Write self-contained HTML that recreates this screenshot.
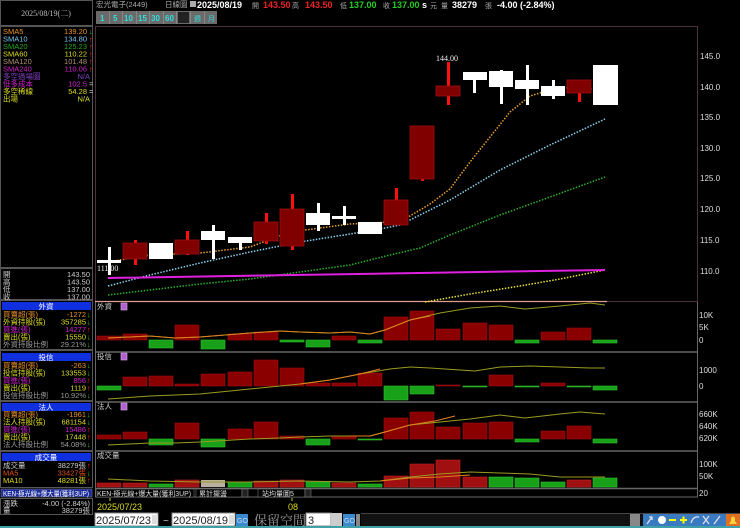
<!DOCTYPE html>
<html><head><meta charset="utf-8"><style>
html,body{margin:0;padding:0;background:#000;width:740px;height:528px;overflow:hidden}
svg{display:block}
text{font-family:"Liberation Sans","Noto Sans CJK TC",sans-serif}
.s{font-family:"Liberation Serif","Noto Serif CJK SC",serif}
</style></head><body>
<svg width="740" height="528" viewBox="0 0 740 528" xmlns="http://www.w3.org/2000/svg">
<rect width="740" height="528" fill="#000"/>
<g fill="none" stroke="#555" stroke-width="1">
<rect x="0.5" y="0.5" width="92" height="25"/>
<rect x="0.5" y="26.5" width="92" height="241"/>
<rect x="0.5" y="268.5" width="92" height="31"/>
<rect x="0.5" y="300.5" width="92" height="49"/>
<rect x="0.5" y="350.5" width="92" height="50"/>
<rect x="0.5" y="401.5" width="92" height="49"/>
<rect x="0.5" y="451.5" width="92" height="36"/>
<rect x="0.5" y="498.5" width="92" height="16"/>
</g>
<text x="46" y="16" font-size="8" fill="#bbb" text-anchor="middle" class="s">2025/08/19(二)</text>
<g font-size="7.5" class="s">
<text x="3" y="34" fill="#e8902a">SMA5</text><text x="87" y="34" fill="#e8902a" text-anchor="end">139.20</text><text x="89" y="34" fill="#2c2">↓</text>
<text x="3" y="41.5" fill="#7cc8f0">SMA10</text><text x="87" y="41.5" fill="#7cc8f0" text-anchor="end">134.80</text><text x="89" y="41.5" fill="#f22">↑</text>
<text x="3" y="49" fill="#2a2">SMA20</text><text x="87" y="49" fill="#2a2" text-anchor="end">125.23</text><text x="89" y="49" fill="#f22">↑</text>
<text x="3" y="56.5" fill="#dd2">SMA60</text><text x="87" y="56.5" fill="#dd2" text-anchor="end">110.22</text><text x="89" y="56.5" fill="#f22">↑</text>
<text x="3" y="64" fill="#b09070">SMA120</text><text x="87" y="64" fill="#b09070" text-anchor="end">101.48</text><text x="89" y="64" fill="#f22">↑</text>
<text x="3" y="71.5" fill="#d020d0">SMA240</text><text x="87" y="71.5" fill="#d020d0" text-anchor="end">110.06</text><text x="89" y="71.5" fill="#f22">↑</text>
<text x="3" y="79" fill="#8040c0">多空過場圖</text><text x="90" y="79" fill="#8040c0" text-anchor="end">N/A</text>
<text x="3" y="86.5" fill="#d020d0">低多成本</text><text x="87" y="86.5" fill="#d020d0" text-anchor="end">102.5</text><text x="89" y="86.5" fill="#ccc">=</text>
<text x="3" y="94" fill="#dd2">多空稀線</text><text x="87" y="94" fill="#dd2" text-anchor="end">54.28</text><text x="89" y="94" fill="#ccc">=</text>
<text x="3" y="101.5" fill="#dd2">出場</text><text x="90" y="101.5" fill="#dd2" text-anchor="end">N/A</text>
</g>
<g font-size="7.5" fill="#ccc" class="s">
<text x="3" y="277">開</text><text x="90" y="277" text-anchor="end">143.50</text>
<text x="3" y="284.5">高</text><text x="90" y="284.5" text-anchor="end">143.50</text>
<text x="3" y="292">低</text><text x="90" y="292" text-anchor="end">137.00</text>
<text x="3" y="299.5">收</text><text x="90" y="299.5" text-anchor="end">137.00</text>
</g>
<g class="s" font-size="7.5">
<rect x="2" y="302" width="89" height="8" fill="#1030e0"/><text x="46" y="309" fill="#fff" text-anchor="middle">外資</text>
<text x="3" y="317" fill="#e8902a">買賣超(張)</text><text x="86" y="317" fill="#e8902a" text-anchor="end">-1272</text><text x="87" y="317" fill="#2c2">↓</text>
<text x="3" y="324.5" fill="#dd2">外資持股(張)</text><text x="86" y="324.5" fill="#dd2" text-anchor="end">357285</text><text x="87" y="324.5" fill="#2c2">↓</text>
<text x="3" y="332" fill="#d020d0">買進(張)</text><text x="86" y="332" fill="#d020d0" text-anchor="end">14277</text><text x="87" y="332" fill="#f22">↑</text>
<text x="3" y="339.5" fill="#dd2">賣出(張)</text><text x="86" y="339.5" fill="#dd2" text-anchor="end">15550</text><text x="87" y="339.5" fill="#2c2">↓</text>
<text x="3" y="347" fill="#999">外資持股比例</text><text x="86" y="347" fill="#999" text-anchor="end">29.21%</text><text x="87" y="347" fill="#2c2">↓</text>
<rect x="2" y="353" width="89" height="8" fill="#1030e0"/><text x="46" y="360" fill="#fff" text-anchor="middle">投信</text>
<text x="3" y="368" fill="#e8902a">買賣超(張)</text><text x="86" y="368" fill="#e8902a" text-anchor="end">-263</text><text x="87" y="368" fill="#2c2">↓</text>
<text x="3" y="375.5" fill="#dd2">投信持股(張)</text><text x="86" y="375.5" fill="#dd2" text-anchor="end">133553</text><text x="87" y="375.5" fill="#2c2">↓</text>
<text x="3" y="383" fill="#d020d0">買進(張)</text><text x="86" y="383" fill="#d020d0" text-anchor="end">856</text><text x="87" y="383" fill="#f22">↑</text>
<text x="3" y="390.5" fill="#dd2">賣出(張)</text><text x="86" y="390.5" fill="#dd2" text-anchor="end">1119</text><text x="87" y="390.5" fill="#f22">↑</text>
<text x="3" y="398" fill="#999">投信持股比例</text><text x="86" y="398" fill="#999" text-anchor="end">10.92%</text><text x="87" y="398" fill="#2c2">↓</text>
<rect x="2" y="403" width="89" height="8" fill="#1030e0"/><text x="46" y="410" fill="#fff" text-anchor="middle">法人</text>
<text x="3" y="417" fill="#e8902a">買賣超(張)</text><text x="86" y="417" fill="#e8902a" text-anchor="end">-1961</text><text x="87" y="417" fill="#2c2">↓</text>
<text x="3" y="424.5" fill="#dd2">法人持股(張)</text><text x="86" y="424.5" fill="#dd2" text-anchor="end">681154</text><text x="87" y="424.5" fill="#2c2">↓</text>
<text x="3" y="432" fill="#d020d0">買進(張)</text><text x="86" y="432" fill="#d020d0" text-anchor="end">15486</text><text x="87" y="432" fill="#f22">↑</text>
<text x="3" y="439.5" fill="#dd2">賣出(張)</text><text x="86" y="439.5" fill="#dd2" text-anchor="end">17448</text><text x="87" y="439.5" fill="#f22">↑</text>
<text x="3" y="447" fill="#999">法人持股比例</text><text x="86" y="447" fill="#999" text-anchor="end">54.08%</text><text x="87" y="447" fill="#2c2">↓</text>
<rect x="2" y="453" width="89" height="8" fill="#1030e0"/><text x="46" y="460" fill="#fff" text-anchor="middle">成交量</text>
<text x="3" y="468" fill="#ccc">成交量</text><text x="86" y="468" fill="#ccc" text-anchor="end">38279張</text><text x="87" y="468" fill="#f22">↑</text>
<text x="3" y="475.5" fill="#e05020">MA5</text><text x="86" y="475.5" fill="#e05020" text-anchor="end">33427張</text><text x="87" y="475.5" fill="#2c2">↓</text>
<text x="3" y="483" fill="#dd2">MA10</text><text x="86" y="483" fill="#dd2" text-anchor="end">48281張</text><text x="87" y="483" fill="#f22">↑</text>
<rect x="1" y="489" width="91" height="8" fill="#1a2a9a" stroke="#888" stroke-width="0.5"/><text x="3" y="496" fill="#fff" font-size="7" textLength="86" lengthAdjust="spacingAndGlyphs">KEN-極光線+爆大量(獲利3UP)</text>
<text x="3" y="506" fill="#ccc">漲跌</text><text x="90" y="506" fill="#ccc" text-anchor="end">-4.00 (-2.84%)</text>
<text x="3" y="513" fill="#ccc">量</text><text x="90" y="513" fill="#ccc" text-anchor="end">38279張</text>
</g>
<g font-size="7.5" class="s" fill="#aaa">
<text x="96" y="7">宏光電子(2449)</text><text x="165" y="7">日線圖</text>
</g>
<rect x="190" y="1" width="6" height="6" fill="#aaa"/>
<g font-size="9" font-weight="bold">
<text x="197" y="8" fill="#fff">2025/08/19</text>
<text x="252" y="8" fill="#aaa" font-weight="normal" font-size="7">開</text><text x="263" y="8" fill="#e22">143.50</text>
<text x="292" y="8" fill="#aaa" font-weight="normal" font-size="7">高</text><text x="305" y="8" fill="#e22">143.50</text>
<text x="340" y="8" fill="#aaa" font-weight="normal" font-size="7">低</text><text x="349" y="8" fill="#2c2">137.00</text>
<text x="383" y="8" fill="#aaa" font-weight="normal" font-size="7">收</text><text x="392" y="8" fill="#2c2">137.00</text>
<text x="422" y="8" fill="#fff">s</text><text x="430" y="8" fill="#aaa" font-weight="normal" font-size="7">元</text>
<text x="441" y="8" fill="#aaa" font-weight="normal" font-size="7">量</text><text x="452" y="8" fill="#fff">38279</text><text x="485" y="8" fill="#aaa" font-weight="normal" font-size="7">張</text>
<text x="497" y="8" fill="#fff">-4.00 (-2.84%)</text>
</g>
<g font-size="8" font-weight="bold" fill="#3dd">
<rect x="96" y="11" width="121" height="13" fill="#6a6a6a"/>
<g stroke="#999" stroke-width="0.6"><line x1="109.5" y1="11" x2="109.5" y2="24"/><line x1="122.5" y1="11" x2="122.5" y2="24"/><line x1="136.5" y1="11" x2="136.5" y2="24"/><line x1="149.5" y1="11" x2="149.5" y2="24"/><line x1="163.5" y1="11" x2="163.5" y2="24"/><line x1="176.5" y1="11" x2="176.5" y2="24"/><line x1="190.5" y1="11" x2="190.5" y2="24"/><line x1="204.5" y1="11" x2="204.5" y2="24"/></g>
<rect x="178" y="12" width="11" height="11" fill="#222"/>
<text x="100" y="21">1</text><text x="113" y="21">5</text><text x="124" y="21">10</text><text x="138" y="21">15</text><text x="151" y="21">30</text><text x="165" y="21">60</text>
<text x="194" y="21" font-size="7" font-weight="normal">週</text><text x="208" y="21" font-size="7" font-weight="normal">月</text>
</g>
<rect x="95.5" y="26.5" width="602" height="275" fill="none" stroke="#503038"/>
<line x1="95" y1="301.5" x2="607" y2="301.5" stroke="#e0a090" stroke-width="1.2"/>
<g font-size="8" fill="#ddd">
<text x="700" y="59">145.0</text><text x="700" y="90">140.0</text><text x="700" y="120">135.0</text><text x="700" y="151">130.0</text><text x="700" y="181">125.0</text><text x="700" y="212">120.0</text><text x="700" y="243">115.0</text><text x="700" y="274">110.0</text>
</g>
<g fill="none" stroke-width="1.5" stroke-dasharray="1.5 1.5">
<polyline stroke="#2bb02b" points="108,295 150,290 200,284 250,279 300,272 350,265 390,255 420,248 450,235 500,215 550,197 605,177"/>
<polyline stroke="#8ad0f0" points="108,286 150,275 200,263 250,252 300,242 350,234 380,229 400,225 420,215 450,200 500,170 550,145 605,119"/>
<polyline stroke="#e8a030" points="108,262 150,255 200,253 250,247 290,232 350,224 390,222 410,216 430,204 450,189 470,162 490,137 510,112 530,96 550,90 575,87 605,91"/>
<polyline stroke="#e8e030" points="425,302 470,294 520,286 560,279 605,270"/>
</g>
<line x1="108" y1="278" x2="605" y2="270" stroke="#e020e0" stroke-width="2"/>
<g fill="#ff1010">
<rect x="108" y="247" width="3" height="28" fill="#fff"/>
<rect x="134" y="240" width="3" height="25"/><rect x="186" y="231" width="3" height="24"/>
<rect x="212" y="225" width="3" height="34" fill="#fff"/><rect x="239" y="237" width="3" height="13" fill="#fff"/>
<rect x="265" y="213" width="3" height="31"/><rect x="291" y="194" width="3" height="56"/>
<rect x="317" y="203" width="3" height="28" fill="#fff"/><rect x="343" y="206" width="3" height="19" fill="#fff"/>
<rect x="395" y="188" width="3" height="37"/><rect x="421" y="126" width="3" height="55"/>
<rect x="447" y="62" width="3" height="43"/><rect x="473" y="72" width="3" height="21" fill="#fff"/>
<rect x="500" y="70" width="3" height="34" fill="#fff"/><rect x="526" y="65" width="3" height="40" fill="#fff"/>
<rect x="552" y="80" width="3" height="19" fill="#fff"/><rect x="578" y="80" width="3" height="22"/>
</g>
<g fill="#fff">
<rect x="97" y="260" width="24" height="3"/><rect x="149" y="243" width="24" height="16"/>
<rect x="201" y="231" width="24" height="9"/><rect x="228" y="237" width="24" height="6"/>
<rect x="306" y="213" width="24" height="12"/><rect x="332" y="216" width="24" height="3"/>
<rect x="358" y="222" width="24" height="12"/><rect x="463" y="72" width="24" height="8"/>
<rect x="489" y="71" width="24" height="16"/><rect x="515" y="80" width="24" height="9"/>
<rect x="541" y="86" width="24" height="10"/><rect x="593" y="65" width="25" height="40"/>
</g>
<g fill="#800000" stroke="#a01010" stroke-width="0.8">
<rect x="123" y="243" width="24" height="16"/><rect x="175" y="240" width="24" height="14"/>
<rect x="254" y="222" width="24" height="19"/><rect x="280" y="209" width="24" height="37"/>
<rect x="384" y="200" width="24" height="25"/><rect x="410" y="126" width="24" height="53"/>
<rect x="436" y="86" width="24" height="10"/><rect x="567" y="80" width="24" height="13"/>
</g>
<text x="436" y="61" font-size="8" fill="#eee" class="s">144.00</text>
<text x="97" y="271" font-size="8" fill="#eee" class="s">111.00</text>
<g fill="none" stroke="#666" stroke-width="1.5">
<line x1="95" y1="352" x2="698" y2="352"/><line x1="95" y1="402" x2="698" y2="402"/><line x1="95" y1="451" x2="698" y2="451"/><line x1="95" y1="488.5" x2="698" y2="488.5"/>
</g>
<line x1="697.5" y1="302" x2="697.5" y2="497" stroke="#666"/>
<line x1="95.5" y1="302" x2="95.5" y2="497" stroke="#666"/>
<line x1="95" y1="497" x2="698" y2="497" stroke="#666"/>
<g font-size="7.5" fill="#ccc" class="s"><text x="97" y="309">外資</text><text x="97" y="359">投信</text><text x="97" y="409">法人</text><text x="97" y="458">成交量</text></g>
<g fill="#b060d0" stroke="#e0b0f0" stroke-width="0.6"><rect x="121" y="303" width="6" height="7"/><rect x="121" y="353" width="6" height="7"/><rect x="121" y="403" width="6" height="7"/></g>
<g font-size="8" fill="#ddd">
<text x="699" y="318">10K</text><text x="699" y="330">5K</text><text x="699" y="343">0</text>
<text x="699" y="373">1000</text><text x="699" y="389">0</text>
<text x="699" y="417">660K</text><text x="699" y="429">640K</text><text x="699" y="441">620K</text>
<text x="699" y="467">100K</text><text x="699" y="479">50K</text><text x="699" y="496">20</text>
</g>
<g fill="#8a0000" stroke="#a01010" stroke-width="0.6">
<rect x="97" y="336" width="24" height="4"/><rect x="123" y="334" width="24" height="6"/><rect x="175" y="325" width="24" height="15"/>
<rect x="228" y="334" width="24" height="6"/><rect x="254" y="332" width="24" height="8"/><rect x="332" y="336" width="24" height="4"/>
<rect x="384" y="317" width="24" height="23"/><rect x="410" y="311" width="24" height="29"/><rect x="436" y="329" width="24" height="11"/>
<rect x="463" y="323" width="24" height="17"/><rect x="489" y="325" width="24" height="15"/><rect x="541" y="332" width="24" height="8"/><rect x="567" y="328" width="24" height="12"/>
</g>
<g fill="#18a018" stroke="#30c030" stroke-width="0.6">
<rect x="149" y="340" width="24" height="8"/><rect x="201" y="340" width="24" height="9"/><rect x="280" y="340" width="24" height="2"/>
<rect x="306" y="340" width="24" height="7"/><rect x="358" y="340" width="24" height="3"/><rect x="515" y="340" width="24" height="3"/><rect x="593" y="340" width="24" height="3"/>
</g>
<polyline fill="none" stroke="#9a9a20" points="108,338 150,336 175,338 200,337 250,333 280,331 300,332 330,333 350,332 370,334 385,330 410,320 440,313 470,308 500,306 525,309 560,306 590,303 605,305"/>
<polyline fill="none" stroke="#e08020" points="108,338 150,336 175,338 200,337 250,333 280,331 300,332 330,333 350,332 370,334 385,330 410,320 430,316"/>
<g fill="#8a0000" stroke="#a01010" stroke-width="0.6">
<rect x="123" y="377" width="24" height="9"/><rect x="149" y="376" width="24" height="10"/><rect x="175" y="384" width="24" height="2"/>
<rect x="201" y="374" width="24" height="12"/><rect x="228" y="372" width="24" height="14"/><rect x="254" y="360" width="24" height="26"/>
<rect x="280" y="368" width="24" height="18"/><rect x="306" y="383" width="24" height="3"/><rect x="332" y="383" width="24" height="3"/>
<rect x="358" y="373" width="24" height="13"/><rect x="436" y="385" width="24" height="1"/><rect x="489" y="375" width="24" height="11"/><rect x="541" y="383" width="24" height="3"/>
</g>
<g fill="#18a018" stroke="#30c030" stroke-width="0.6">
<rect x="97" y="386" width="24" height="4"/><rect x="384" y="386" width="24" height="14"/><rect x="410" y="386" width="24" height="8"/>
<rect x="463" y="386" width="24" height="1"/><rect x="515" y="386" width="24" height="1"/><rect x="567" y="386" width="24" height="1"/><rect x="593" y="386" width="24" height="4"/>
</g>
<polyline fill="none" stroke="#9a9a20" points="108,399 150,396 200,394 250,389 300,384 330,380 360,374 390,369 410,367 430,368 460,370 475,371 500,367 530,366 560,367 590,368 605,368"/>
<polyline fill="none" stroke="#e08020" points="300,384 330,380 360,374 380,369"/>
<g fill="#8a0000" stroke="#a01010" stroke-width="0.6">
<rect x="97" y="435" width="24" height="4"/><rect x="123" y="432" width="24" height="7"/><rect x="175" y="423" width="24" height="16"/>
<rect x="228" y="429" width="24" height="10"/><rect x="254" y="422" width="24" height="17"/><rect x="280" y="436" width="24" height="3"/>
<rect x="332" y="436" width="24" height="3"/><rect x="384" y="418" width="24" height="21"/><rect x="410" y="412" width="24" height="27"/>
<rect x="436" y="427" width="24" height="12"/><rect x="463" y="423" width="24" height="16"/><rect x="489" y="422" width="24" height="17"/>
<rect x="541" y="431" width="24" height="8"/><rect x="567" y="426" width="24" height="13"/>
</g>
<g fill="#18a018" stroke="#30c030" stroke-width="0.6">
<rect x="149" y="439" width="24" height="6"/><rect x="201" y="439" width="24" height="8"/><rect x="306" y="439" width="24" height="6"/>
<rect x="358" y="439" width="24" height="1"/><rect x="515" y="439" width="24" height="3"/><rect x="593" y="439" width="24" height="4"/>
</g>
<polyline fill="none" stroke="#9a9a20" points="108,445 150,443 175,443 200,442 250,439 280,438 300,437 330,436 350,436 370,436 385,432 410,425 440,422 470,419 500,415 525,418 560,414 580,412 605,414"/>
<polyline fill="none" stroke="#e08020" points="350,436 370,436 385,432 410,425 435,421 455,416"/>
<g fill="#a01010" stroke="#c02020" stroke-width="0.6">
<rect x="97" y="483" width="24" height="4"/><rect x="123" y="483" width="24" height="4"/><rect x="175" y="480" width="24" height="7"/>
<rect x="254" y="481" width="24" height="6"/><rect x="280" y="480" width="24" height="7"/><rect x="332" y="483" width="24" height="4"/>
<rect x="384" y="476" width="24" height="11"/><rect x="410" y="464" width="24" height="23"/><rect x="436" y="460" width="24" height="27"/>
<rect x="463" y="477" width="24" height="10"/><rect x="567" y="480" width="24" height="7"/>
</g>
<g fill="#18a018" stroke="#30c030" stroke-width="0.6">
<rect x="149" y="484" width="24" height="3"/><rect x="228" y="482" width="24" height="5"/><rect x="306" y="482" width="24" height="5"/>
<rect x="358" y="484" width="24" height="3"/><rect x="489" y="477" width="24" height="10"/><rect x="515" y="478" width="24" height="9"/>
<rect x="541" y="482" width="24" height="5"/><rect x="593" y="478" width="24" height="9"/>
</g>
<rect x="201" y="480" width="24" height="7" fill="#bbb0a0"/>
<polyline fill="none" stroke="#9a9a20" points="108,479 150,481 200,482 250,482 300,481 350,482 380,481 410,477 440,474 470,472 500,473 530,474 560,477 590,477 605,477"/>
<polyline fill="none" stroke="#e08020" points="380,481 410,478 440,477 470,475"/>
<g font-size="7" class="s" fill="#ddd">
<rect x="96" y="489" width="98" height="8" fill="#000" stroke="#888" stroke-width="0.5"/><text x="97" y="496" textLength="94" lengthAdjust="spacingAndGlyphs">KEN-極光線+爆大量(獲利3UP)</text>
<rect x="196" y="489" width="46" height="8" fill="#000" stroke="#888" stroke-width="0.5"/><text x="199" y="496">累計擺盪</text>
<rect x="242" y="489" width="6" height="8" fill="#222" stroke="#888" stroke-width="0.5"/>
<rect x="258" y="489" width="47" height="8" fill="#000" stroke="#888" stroke-width="0.5"/><text x="262" y="496">站均量圖5</text>
<rect x="305" y="489" width="6" height="8" fill="#222" stroke="#888" stroke-width="0.5"/>
</g>
<line x1="110" y1="498" x2="110" y2="501" stroke="#cc3"/><line x1="292" y1="498" x2="292" y2="501" stroke="#cc3"/>
<text x="97" y="510" font-size="9" fill="#dd2">2025/07/23</text>
<text x="288" y="510" font-size="9" fill="#dd2">08</text>
<rect x="95" y="513" width="63" height="13" fill="#fff" stroke="#888"/>
<text x="96" y="524" font-size="11" fill="#222">2025/07/23</text>
<rect x="152" y="515" width="6" height="9" fill="#ddd"/>
<text x="163" y="524" font-size="10" fill="#ccc">~</text>
<rect x="172" y="513" width="63" height="13" fill="#fff" stroke="#888"/>
<text x="173" y="524" font-size="11" fill="#222">2025/08/19</text>
<rect x="229" y="515" width="6" height="9" fill="#ddd"/>
<rect x="236" y="514" width="12" height="12" fill="#3a8ad0"/><text x="237" y="523" font-size="7" fill="#cde">GO</text>
<text x="254" y="525" font-size="13" fill="#999" class="s">保留空間</text>
<rect x="306" y="513" width="25" height="13" fill="#fff" stroke="#888"/><text x="308" y="524" font-size="11" fill="#222">3</text>
<rect x="331" y="513" width="11" height="13" fill="#ccc"/>
<rect x="343" y="514" width="12" height="12" fill="#3a8ad0"/><text x="344" y="523" font-size="7" fill="#cde">GO</text>
<rect x="356" y="514" width="4" height="12" fill="#888"/>
<rect x="361" y="513" width="380" height="13" fill="#111"/>
<line x1="361" y1="513.5" x2="740" y2="513.5" stroke="#444"/>
<rect x="630" y="514" width="10" height="12" fill="#888"/>
<rect x="643" y="514" width="97" height="12" fill="#3a7ac0"/>
<g stroke="#dde" stroke-width="1.3" fill="none">
<path d="M647,524 L652,517 M649,517 L652,517 L652,520"/>
<circle cx="662" cy="520" r="4" fill="#fff" stroke="none"/>
<path d="M669,520 H676" stroke="#ff0" stroke-width="2"/>
<path d="M680,520 H687 M683.5,516.5 V523.5" stroke="#ff0" stroke-width="2"/>
<path d="M691,523 Q693,516 699,517"/>
<path d="M703,516 L709,524 M709,516 L703,524"/>
<path d="M714,524 L720,516"/>
</g>
<rect x="726" y="514" width="14" height="12" fill="#e07020"/><path d="M729,524 H737 L735,521 V518 Q733,515 731,518 V521 Z" fill="#f8d040"/>
<rect x="0" y="526" width="740" height="2" fill="#40a0a8"/>
</svg>
</body></html>
